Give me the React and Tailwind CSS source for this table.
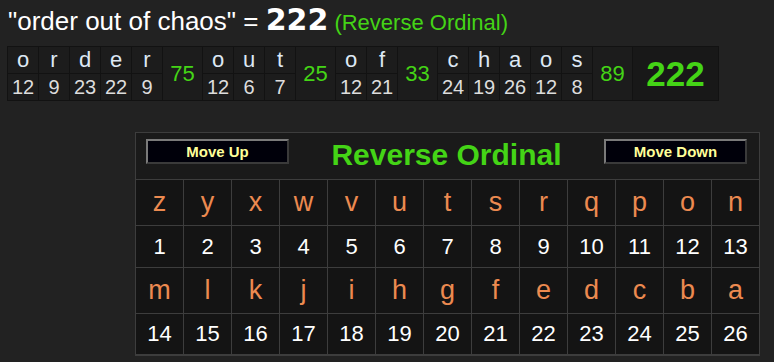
import React from "react";

const words = [
  { letters: ["o", "r", "d", "e", "r"], values: [12, 9, 23, 22, 9], sum: 75 },
  { letters: ["o", "u", "t"], values: [12, 6, 7], sum: 25 },
  { letters: ["o", "f"], values: [12, 21], sum: 33 },
  { letters: ["c", "h", "a", "o", "s"], values: [24, 19, 26, 12, 8], sum: 89 },
];

const alphabet = "zyxwvutsrqponmlkjihgfedcba".split("");

const Breakdown = () => (
  <div className="ml-[7px] mt-[11px] flex w-fit gap-px bg-[#121212] p-px">
    {words.map((w, wi) => (
      <React.Fragment key={wi}>
        {w.letters.map((l, i) => (
          <div key={i} className="flex w-[30px] flex-col gap-px">
            <div className="flex h-[26px] items-center justify-center bg-[#1c1c1c] text-[22px] leading-none text-[#dde8f4]">
              {l}
            </div>
            <div className="flex h-[26px] items-center justify-center bg-[#1c1c1c] text-[20px] leading-none text-[#dddddd]">
              {w.values[i]}
            </div>
          </div>
        ))}
        <div className="flex w-[39px] items-center justify-center bg-[#1c1c1c] text-[22px] leading-none text-[#44d416]">
          {w.sum}
        </div>
      </React.Fragment>
    ))}
    <div className="flex w-[85px] items-center justify-center bg-[#181818] text-[35px] font-bold leading-none text-[#44d416]">
      222
    </div>
  </div>
);

const MoveButton = ({ label }) => (
  <button className="mt-[6px] flex h-[25px] w-[143px] items-center justify-center border-2 border-t-[#7a7a7a] border-l-[#7a7a7a] border-b-[#3a3a3a] border-r-[#3a3a3a] bg-[#00000a] text-[15px] font-bold leading-none text-[#ffff99]">
    {label}
  </button>
);

const CipherTable = () => {
  const rows = [
    { cells: alphabet.slice(0, 13), kind: "letter", h: "h-[45px]" },
    { cells: alphabet.slice(0, 13).map((_, i) => i + 1), kind: "num", h: "h-[41px]" },
    { cells: alphabet.slice(13), kind: "letter", h: "h-[45px]" },
    { cells: alphabet.slice(13).map((_, i) => i + 14), kind: "num", h: "h-[40px]" },
  ];

  return (
    <div className="ml-[135px] mt-[31px] w-[625px] bg-[#3d3d3d] p-px pb-[2px]">
      {/* Header */}
      <div className="flex h-[46px] items-start justify-between bg-[#1a1a1a] pl-[10px] pr-[12px]">
        <MoveButton label="Move Up" />
        <div className="mt-[7px] text-[30px] font-bold leading-none text-[#44d416]">
          Reverse Ordinal
        </div>
        <MoveButton label="Move Down" />
      </div>

      {/* Letters / values */}
      <div className="mt-px grid grid-cols-[repeat(13,47px)] gap-px">
        {rows.map((row, ri) =>
          row.cells.map((c, ci) => (
            <div
              key={ri + "-" + ci}
              className={
                row.kind === "letter"
                  ? `flex ${row.h} items-center justify-center bg-[#141414] text-[27px] leading-none text-[#ec8a50]`
                  : `flex ${row.h} items-center justify-center bg-[#141414] text-[22px] leading-none text-white`
              }
            >
              {c}
            </div>
          ))
        )}
      </div>
    </div>
  );
};

export default function App() {
  return (
    <div className="min-h-screen bg-[#222222] font-['Liberation_Sans',Arial,sans-serif]">
      {/* Title */}
      <div className="pl-[8px] pt-[5px] leading-none text-white">
        <span className="text-[26px]">"order out of chaos" = </span>
        <span className="font-['DejaVu_Sans',sans-serif] text-[30px] font-bold">222</span>
        <span className="text-[22px] text-[#44d416]"> (Reverse Ordinal)</span>
      </div>

      <Breakdown />
      <CipherTable />
    </div>
  );
}
